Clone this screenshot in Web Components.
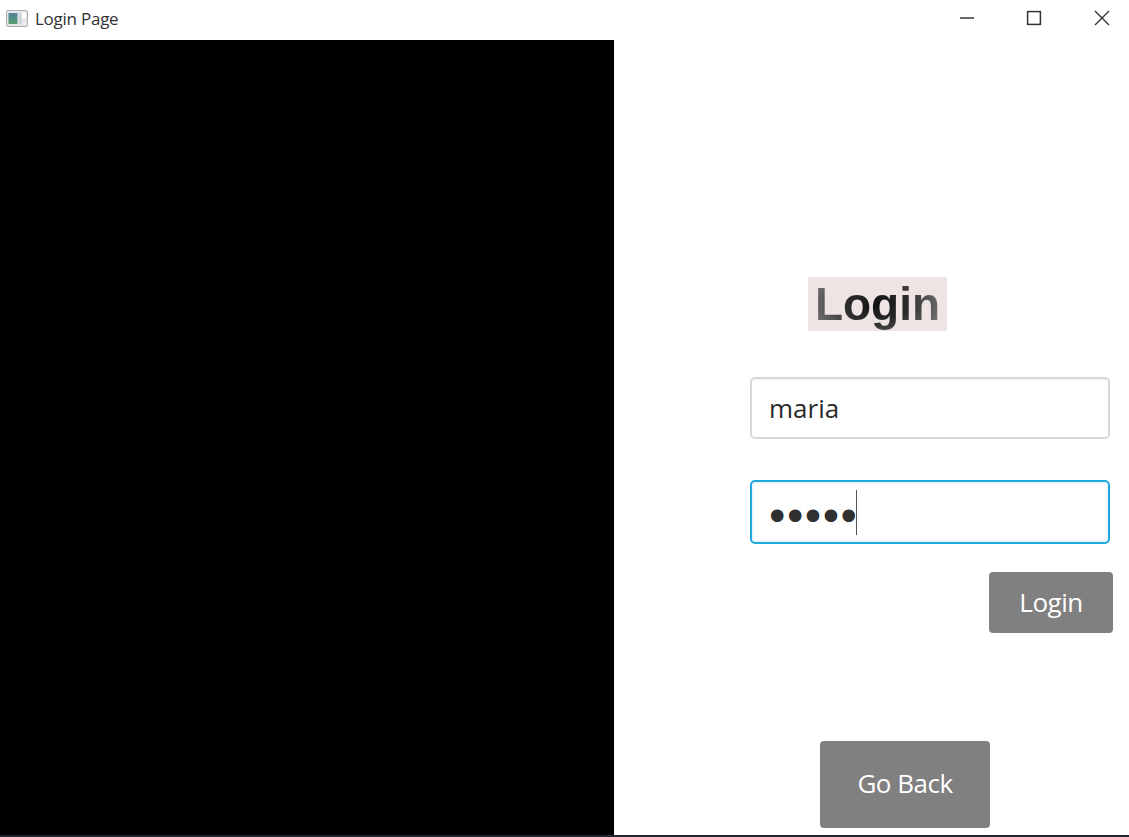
<!DOCTYPE html>
<html>
<head>
<meta charset="utf-8">
<title>Login Page</title>
<style>
  html, body { margin: 0; height: 100%; background: #fff; overflow: hidden; }
  body { font-family: "Open Sans", "Noto Sans", sans-serif; }
</style>
</head>
<body>
<login-window>
  <span slot="title">Login Page</span>
  <login-form></login-form>
</login-window>

<script>
class TitleBar extends HTMLElement {
  constructor() {
    super();
    this.attachShadow({ mode: 'open' });
    this.shadowRoot.innerHTML = `
      <style>
        :host { display: flex; align-items: center; height: 40px; background: #fff; color: #333; }
        .app-icon { margin: 0 7px 0 6px; flex: none; display: block; position: relative; top: -2px; }
        .title { flex: 1; font: 17px/20px "Open Sans", sans-serif; position: relative; top: -1px; letter-spacing: -.25px; }
        .controls { display: flex; gap: 13.6px; }
        .ctl { width: 54px; height: 40px; display: flex; align-items: center; justify-content: center; }
        .ctl svg { display: block; position: relative; top: -2px; }
      </style>
      <svg class="app-icon" width="22" height="17" viewBox="0 0 22 17">
        <defs>
          <linearGradient id="pane" x1="0" y1="0" x2="0" y2="1">
            <stop offset="0" stop-color="#4f7f9a"/>
            <stop offset="1" stop-color="#57a070"/>
          </linearGradient>
        </defs>
        <rect x=".5" y=".5" width="21" height="16" rx="1.5" fill="#e6e8ea" stroke="#a9adb2"/>
        <rect x="2.5" y="3" width="9" height="11" fill="url(#pane)"/>
        <rect x="13" y="3" width="2.5" height="11" fill="#c9d0d4"/>
        <rect x="16" y="3" width="4" height="5" fill="#fff"/>
      </svg>
      <span class="title"><slot></slot></span>
      <div class="controls">
        <div class="ctl"><svg width="16" height="16" viewBox="0 0 16 16"><path d="M1 8h14" stroke="#333" stroke-width="1.5"/></svg></div>
        <div class="ctl"><svg width="16" height="16" viewBox="0 0 16 16"><rect x="1.6" y="1.6" width="12.8" height="12.8" fill="none" stroke="#333" stroke-width="1.5"/></svg></div>
        <div class="ctl"><svg width="16" height="16" viewBox="0 0 16 16"><path d="M1 1l14 14M15 1L1 15" stroke="#333" stroke-width="1.4" fill="none"/></svg></div>
      </div>`;
  }
}
customElements.define('title-bar', TitleBar);

class LoginWindow extends HTMLElement {
  constructor() {
    super();
    this.attachShadow({ mode: 'open' });
    this.shadowRoot.innerHTML = `
      <style>
        :host { display: flex; flex-direction: column; height: 837px; background: #fff; }
        .body { flex: 1; display: flex; min-height: 0; }
        .left { width: 614px; background: #000; flex: none; }
        .right { flex: 1; min-width: 0; }
        .edge { height: 2px; background: #1d2530; flex: none; }
      </style>
      <title-bar><slot name="title"></slot></title-bar>
      <div class="body">
        <div class="left"></div>
        <div class="right"><slot></slot></div>
      </div>
      <div class="edge"></div>`;
  }
}
customElements.define('login-window', LoginWindow);

class FxField extends HTMLElement {
  constructor() {
    super();
    this.attachShadow({ mode: 'open' });
    this.shadowRoot.innerHTML = `
      <style>
        :host { display: flex; align-items: center; box-sizing: border-box; width: 360px; height: 62px;
                padding-left: 17px; background: #fff; border: 2px solid #d8d8d8; border-radius: 5px;
                box-shadow: inset 0 2px 2px -1px #eee;
                font: 26px/1 "Open Sans", sans-serif; color: #2b2b2b; }
        :host([focused]) { height: 64px; padding-left: 18px; border-color: #1fa9dc; box-shadow: inset 0 0 3px #bfe6f5; }
        .caret { width: 1.5px; height: 45px; background: #555; margin-left: -4px; }
        .dots { font: 16.5px/1 "DejaVu Sans", sans-serif; letter-spacing: 3.5px; position: relative; top: 3px; color: #303030; }
      </style>
      <span class="value"><slot></slot></span>`;
  }
  connectedCallback() {
    if (this.hasAttribute('focused')) {
      const caret = document.createElement('span');
      caret.className = 'caret';
      this.shadowRoot.querySelector('.value').className = 'dots';
      this.shadowRoot.appendChild(caret);
    }
  }
}
customElements.define('fx-field', FxField);

class FxButton extends HTMLElement {
  constructor() {
    super();
    this.attachShadow({ mode: 'open' });
    this.shadowRoot.innerHTML = `
      <style>
        :host { display: flex; align-items: center; justify-content: center; box-sizing: border-box;
                background: #808080; color: #fff; border-radius: 4px;
                font: 26px/1 "Open Sans", sans-serif; letter-spacing: -.5px; padding-bottom: 3px; }
      </style>
      <slot></slot>`;
  }
}
customElements.define('fx-button', FxButton);

class LoginForm extends HTMLElement {
  constructor() {
    super();
    this.attachShadow({ mode: 'open' });
    this.shadowRoot.innerHTML = `
      <style>
        :host { display: flex; flex-direction: column; align-items: flex-start; box-sizing: border-box; height: 100%; padding-top: 237px; }
        h1 { margin: 0 0 0 194px; width: 139px; height: 54px; background: #efe4e4; text-align: center;
             font: bold 46px/54px "Liberation Sans", Arial, sans-serif; }
        h1 span { display: inline-block; filter: blur(.4px);
                  background: radial-gradient(ellipse 70px 42px at 50% 50%, #111 0, #2c2c2c 45%, #5e5e5e 80%, #7a7a7a 100%);
                  -webkit-background-clip: text; background-clip: text; color: transparent; }
        .user { margin: 46px 0 0 136px; }
        .pass { margin: 41px 0 0 136px; }
        .login { margin: 28px 0 0 375px; width: 124px; height: 61px; padding-bottom: 1px; }
        .back { margin: 108px 0 0 206px; width: 170px; height: 87px; }
      </style>
      <h1><span>Login</span></h1>
      <fx-field class="user">maria</fx-field>
      <fx-field class="pass" focused>●●●●●</fx-field>
      <fx-button class="login">Login</fx-button>
      <fx-button class="back">Go Back</fx-button>`;
  }
}
customElements.define('login-form', LoginForm);
</script>
</body>
</html>
